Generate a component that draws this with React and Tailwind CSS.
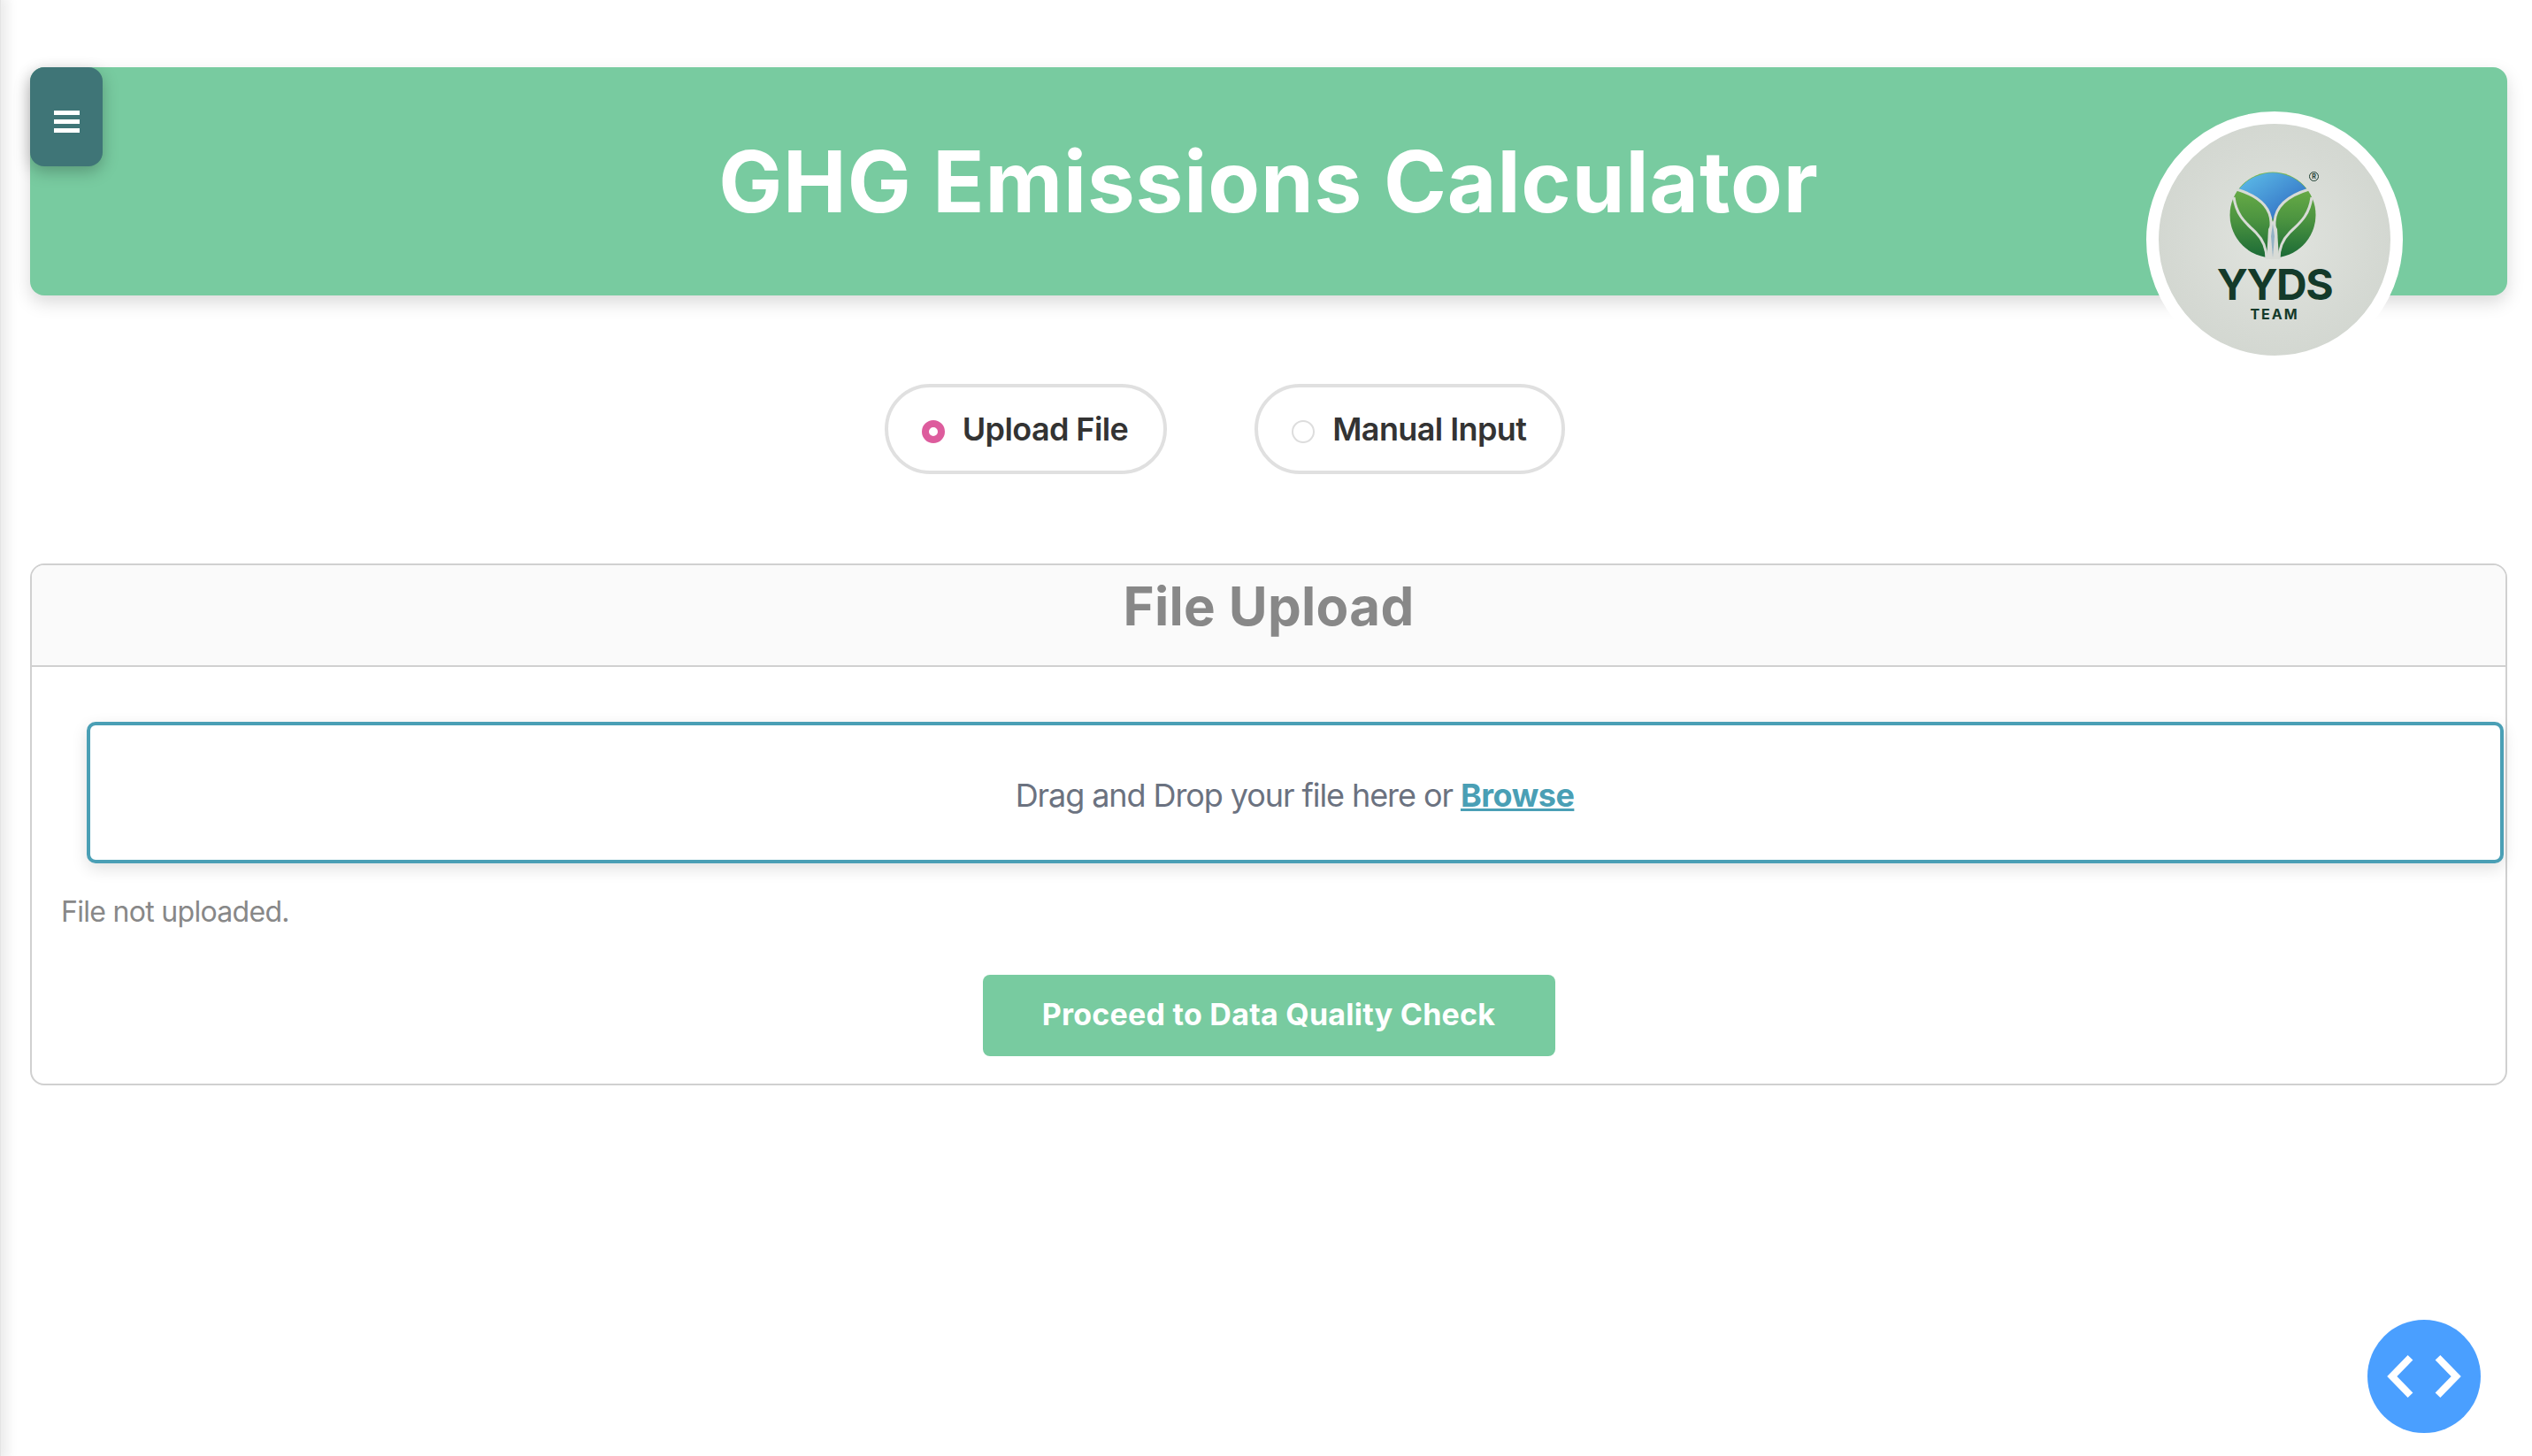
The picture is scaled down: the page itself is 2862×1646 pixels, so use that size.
import React from "react";

const heading = "font-['Inter',sans-serif] font-bold";

const Emblem = () => (
  <svg viewBox="0 0 110 112" className="h-[112px] w-[110px]">
    <defs>
      <linearGradient id="leaf" x1="0" y1="0" x2="0" y2="1">
        <stop offset="0" stopColor="#77b84a" />
        <stop offset="0.55" stopColor="#4c9440" />
        <stop offset="1" stopColor="#1b6a36" />
      </linearGradient>
      <linearGradient id="sky" x1="0" y1="0" x2="1" y2="1">
        <stop offset="0" stopColor="#5fc0ea" />
        <stop offset="1" stopColor="#2a62bd" />
      </linearGradient>
    </defs>
    <circle cx="53" cy="56" r="48.5" fill="url(#leaf)" />
    <path d="M14 28 A48.5 48.5 0 0 1 92 28 C75 34 58 44 53 62 C48 44 31 34 14 28Z" fill="url(#sky)" />
    <g fill="none" stroke="#d8dbd6" strokeWidth="3">
      <path d="M12 27 C32 33 50 44 51 64 L51 106" />
      <path d="M94 27 C74 33 56 44 55 64 L55 106" />
      <path d="M9 36 C12 58 24 66 34 76 C42 84 46 94 46 106" />
      <path d="M97 36 C94 58 82 66 72 76 C64 84 60 94 60 106" />
    </g>
    <path d="M46 106 L48 72 L53 62 L58 72 L60 106Z" fill="#d8dbd6" />
    <path d="M53 66 L55 80 L53 104 L51 80Z" fill="#5b8fb8" opacity="0.55" />
  </svg>
);

const Logo = () => (
  <div className="absolute right-[118px] top-[50px] flex h-[290px] w-[290px] flex-col items-center rounded-full border-[14px] border-white bg-[radial-gradient(circle,#e1e4df_0%,#d5d9d3_60%,#ced3cc_100%)] pt-[47px] font-['Inter',sans-serif]">
    <div className="relative h-[112px] w-[110px]">
      <Emblem />
      <span className="absolute right-[5px] top-[7px] flex h-[11px] w-[11px] items-center justify-center rounded-full border border-[#1c3c30] text-[7px] font-bold leading-none text-[#1c3c30]">R</span>
    </div>
    <span className="mt-[1px] text-[48px] font-bold leading-[44px] tracking-[-1.5px] text-[#143a2a]">YYDS</span>
    <span className="mt-[2px] text-[16px] font-bold leading-[18px] tracking-[2px] text-[#143a2a]">TEAM</span>
  </div>
);

const RadioPill = ({ label, active }) => (
  <label className="flex h-[102px] items-center gap-[20px] rounded-full border-4 border-[#e0e0e0] pl-[38px] pr-[40px]">
    {active ? (
      <span className="mt-[6px] h-[26px] w-[26px] rounded-full border-[8px] border-[#dd5c9d] bg-white" />
    ) : (
      <span className="mt-[6px] h-[26px] w-[26px] rounded-full border-2 border-[#dddddd] bg-white" />
    )}
    <span className="text-[36px] font-semibold tracking-[-0.6px] text-[#333333]">{label}</span>
  </label>
);

const App = () => {
  return (
    <div className="relative h-[1646px] overflow-hidden bg-white pl-[34px] pr-[28px] pt-[76px] font-['Inter',sans-serif]">
      {/* shadow of the closed sidebar */}
      <div className="absolute bottom-0 left-0 top-0 w-px bg-[#e4e4e4] shadow-[0_0_14px_6px_rgba(0,0,0,0.1)]" />

      <header className="relative flex h-[258px] items-center justify-center rounded-[16px] bg-[#78cba0] shadow-[0_8px_20px_rgba(0,0,0,0.15)]">
        <button className="absolute left-0 top-0 flex h-[112px] w-[82px] flex-col items-center justify-center gap-[5px] rounded-[16px] bg-[#3f7577] pt-[11px] shadow-[0_6px_18px_rgba(0,0,0,0.25)]">
          <span className="h-[5px] w-[29px] bg-white" />
          <span className="h-[5px] w-[29px] bg-white" />
          <span className="h-[5px] w-[29px] bg-white" />
        </button>
        <h1 className={`${heading} text-[96px] leading-none tracking-[0.9px] text-white`}>GHG Emissions Calculator</h1>
        <Logo />
      </header>

      <div className="mt-[100px] flex justify-center gap-[99px] pr-[99px]">
        <RadioPill label="Upload File" active />
        <RadioPill label="Manual Input" />
      </div>

      <section className="mt-[101px] h-[590px] rounded-[16px] border-2 border-[#d0d0d0]">
        <div className="flex h-[115px] justify-center rounded-t-[14px] border-b-2 border-[#d0d0d0] bg-[#fafafa] pt-[11px]">
          <h2 className={`${heading} text-[60px] leading-[70px] tracking-[0.3px] text-[#888888]`}>File Upload</h2>
        </div>
        <div className="ml-[62px] mr-[2px] mt-[62px] flex h-[160px] items-center justify-center rounded-[10px] border-4 border-[#4a9fb5] bg-white pt-[5px] text-[36px] tracking-[-1.08px] text-[#6b7280] shadow-[0_6px_18px_rgba(0,0,0,0.12)]">
          <p className="mr-[1px]">
            Drag and Drop your file here or{" "}
            <a className="font-bold tracking-[-0.5px] text-[#4a9fb5] underline">Browse</a>
          </p>
        </div>
        <p className="ml-[33px] mt-[35px] text-[32px] leading-[40px] tracking-[-0.7px] text-[#888888]">File not uploaded.</p>
        <div className="mt-[51px] flex justify-center">
          <button className={`${heading} h-[92px] w-[647px] rounded-[8px] bg-[#78cba0] pb-[4px] text-[34px] tracking-[0.25px] text-white`}>
            Proceed to Data Quality Check
          </button>
        </div>
      </section>

      <button className="absolute left-[2676px] top-[1492px] h-[128px] w-[128px] rounded-full bg-[#4a9fff]">
        <svg viewBox="0 0 128 128" className="h-full w-full" fill="none" stroke="#ffffff" strokeWidth="8">
          <path d="M48.5 42.7 L27.8 64 L48.5 85.3" />
          <path d="M79.5 42.7 L100.2 64 L79.5 85.3" />
        </svg>
      </button>
    </div>
  );
};

export default App;
